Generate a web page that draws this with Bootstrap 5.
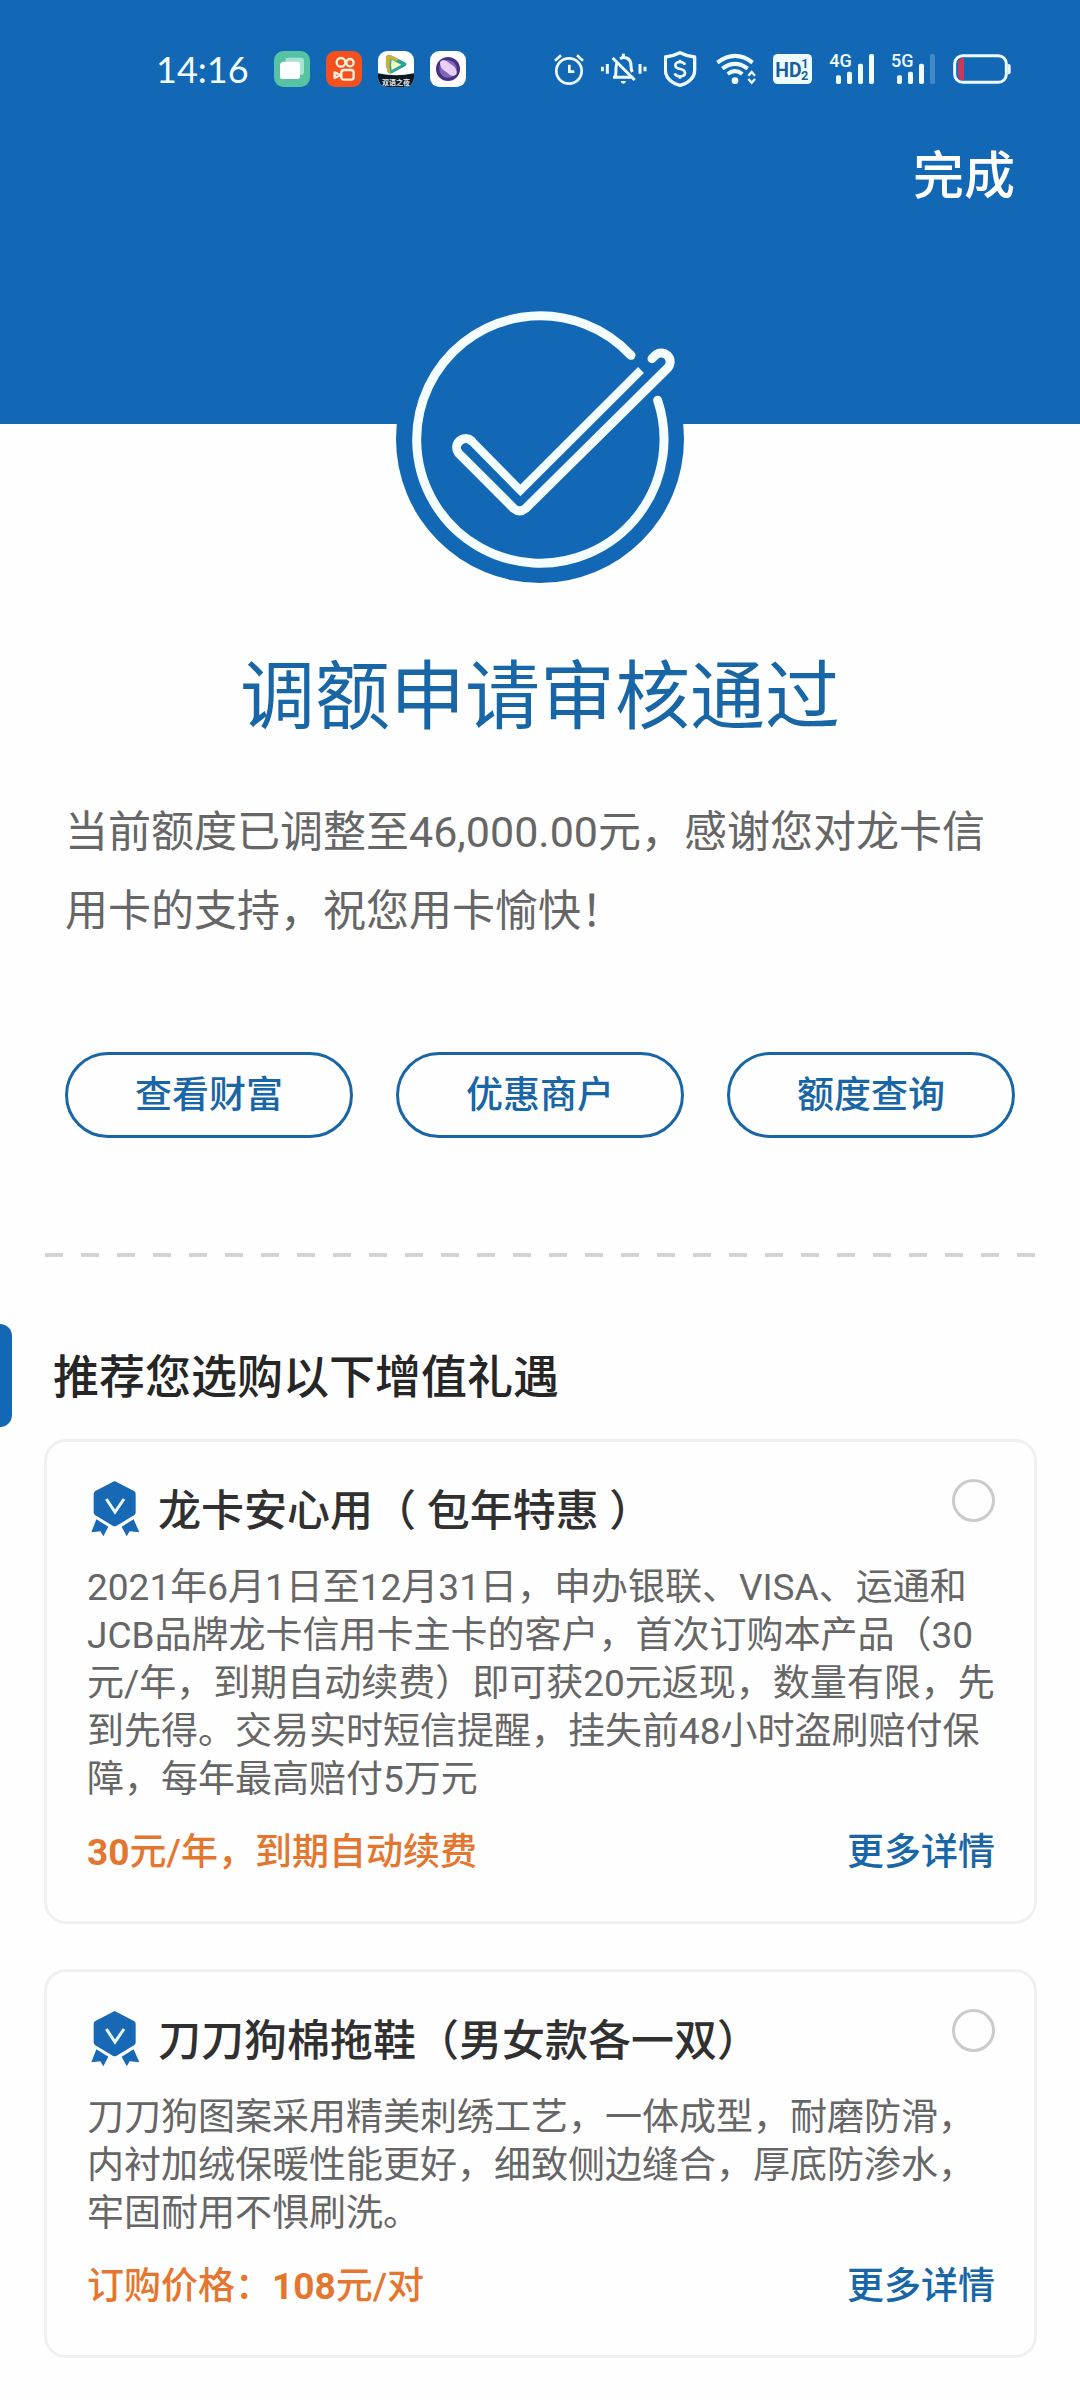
<!DOCTYPE html>
<html lang="zh-CN">
<head>
<meta charset="utf-8">
<meta name="viewport" content="width=device-width, initial-scale=1">
<title>调额申请审核通过</title>
<link href="https://cdn.jsdelivr.net/npm/bootstrap@5.3.0/dist/css/bootstrap.min.css" rel="stylesheet">
<style>
:root { --brand: #1368b6; --brand-ink: #1866a6; --accent: #e5762f; }
body { font-family: Roboto, "Noto Sans CJK SC", sans-serif; background: #fefefe; color: #2b2b2b; }
svg { display: block; flex: none; }
.hero { background: var(--brand); height: 424px; }
.status { padding: 51px 69px 0 156px; height: 87px; color: #f2fdff; }
.status svg { height: 36px; }
.clock { font-family: Lato, sans-serif; font-size: 36px; line-height: 36px; width: 118px; }
.status-icons { gap: 16px; }
.gutter { padding-left: 65px; padding-right: 65px; }
.done { font-size: 51px; line-height: 60px; margin-top: 60px; font-weight: 500; }
.seal { width: 288px; height: 288px; margin-top: -129px; }
.result-title { font-size: 75px; line-height: 100px; font-weight: 400; color: var(--brand-ink); margin: 64px 0 46px; }
.message { font-size: 43px; line-height: 79px; color: #666; margin-bottom: 101px; }
.actions { gap: 43px; }
.btn-pill { --bs-btn-color: var(--brand-ink); --bs-btn-border-color: var(--brand-ink); --bs-btn-hover-bg: var(--brand); --bs-btn-hover-color: #fff; --bs-btn-border-width: 3px; font-size: 37px; line-height: 48px; height: 86px; padding-top: 8px; font-weight: 500; }
.dashes { height: 4px; margin: 115px 45px 67px; background: repeating-linear-gradient(90deg, #d3d3d3 0 18px, transparent 18px 36px); }
.section-head { height: 103px; margin-bottom: 12px; gap: 41px; }
.section-tag { width: 12px; height: 103px; border-radius: 0 12px 12px 0; background: var(--brand); }
.section-head h2 { font-size: 46px; line-height: 60px; font-weight: 500; color: #262626; padding-top: 3px; }
.offers { padding: 0 43px 45px 44px; gap: 45px; }
.offer { border: 3px solid #f0f0f1; border-radius: 22px; background: #fefefe; padding: 37px 39px 44px 40px; }
.offer-title { font-size: 43px; line-height: 60px; font-weight: 500; color: #303030; }
.offer-head { gap: 17px; margin-bottom: 22px; }
.medal { width: 50px; height: 56px; margin: 0 0 4px 4px; }
.offer-radio.form-check-input { width: 43px; height: 43px; border: 3px solid #cbcbcb; margin: 0 0 20px; background-color: #fefefe; }
.offer-text { font-size: 37px; line-height: 48px; color: #666; margin-bottom: 25px; }
.offer-foot { font-size: 37px; line-height: 48px; }
.price { color: var(--accent); font-weight: 500; }
.price b { font-weight: 700; }
.more { color: var(--brand-ink); font-weight: 500; }
</style>
</head>
<body>
<header class="hero">
  <div class="status d-flex align-items-center">
    <time class="clock">14:16</time>
    <div class="status-icons d-flex">
      <svg viewBox="402 63 108 108"><rect x="402" y="63" width="108" height="108" rx="28" fill="#55c3a4"/><rect x="436" y="83" width="56" height="52" rx="9" fill="#a5e4d2"/><path d="M427 95h46q7 0 7 7v38q0 7-7 7h-46q-7 0-7-7v-38z" fill="#fff"/></svg>
      <svg viewBox="558 63 108 108"><rect x="558" y="63" width="108" height="108" rx="28" fill="#f4511e"/><g fill="none" stroke="#fff1df" stroke-width="7" stroke-linejoin="round"><circle cx="603" cy="97" r="13"/><circle cx="630" cy="98" r="11"/><rect x="604" y="120" width="37" height="29" rx="8"/><path d="M584 127l17 8-17 9z"/></g></svg>
      <svg viewBox="714 63 108 108"><clipPath id="tv"><rect x="714" y="63" width="108" height="108" rx="28"/></clipPath><g clip-path="url(#tv)"><path fill="#fff" d="M714 63h108v108H714z"/><path fill="#0c1824" d="M714 130q54 12 108 0v41H714z"/><path d="M738 80q4-8 13-5l44 22q9 6 0 12l-39 21q-11 4-14-6-7-22-4-44z" fill="#28a98c"/><path d="M738 80q4-8 13-5l24 12-24 43q-7 0-9-6-6-22-4-44z" fill="#c9b13a"/><path d="M752 87l40 16-40 24q-6-20 0-40z" fill="#2a9fc4"/><path d="M755 89l29 15-29 16q-4-16 0-31z" fill="#f1fbb8"/><text x="768" y="164" text-anchor="middle" font-size="21" font-weight="700" font-family="Noto Sans CJK SC, sans-serif" fill="#e8eef2">双语之夜</text></g></svg>
      <svg viewBox="870 63 108 108"><rect x="870" y="63" width="108" height="108" rx="28" fill="#fdfcff"/><circle cx="924" cy="117" r="36" fill="#44317f"/><circle cx="924" cy="117" r="26" fill="#8264bd"/><path d="M900 96q12-14 28 4 26 14 22 32-12 14-28-4-24-12-22-32z" fill="#e8cff4"/></svg>
    </div>
    <div class="status-icons d-flex ms-auto">
      <svg viewBox="72 63 93 108" fill="none" stroke="#effcff" stroke-width="8"><circle cx="117" cy="123" r="38"/><path d="M118 104v21h15M75 92l18-16M141 76l18 16"/></svg>
      <svg viewBox="213 63 141 108" fill="none" stroke="#effcff" stroke-width="9"><path d="M217 110v14M232 102v29M330 102v29M345 110v14"/><path d="M249 142h61M256 140q2-8 2-28 0-11 6-17M270 86q10-6 20-2 13 5 13 24 0 10 4 18M248 84l66 66" stroke-width="9"/><path d="M280 71v10"/><path d="M272 153h16q-1 8-8 8t-8-8z" fill="#effcff" stroke="none"/></svg>
      <svg viewBox="402 63 102 108" fill="none" stroke="#effcff"><path d="M450 68q20 10 44 13v38q0 34-44 47-44-13-44-47V81q24-3 44-13z" stroke-width="10" stroke-linejoin="round"/><path d="M465 104q-3-8-15-8-14 0-14 10 0 9 14 11 15 2 15 12t-15 10q-13 0-16-9M450 89v9M450 137v9" stroke-width="8"/></svg>
      <svg viewBox="552 63 129 108" fill="none" stroke="#effcff" stroke-width="12"><path d="M562 98q54-41 106 0M577 116q38-29 76 0M593 132q22-17 44 0"/><circle cx="615" cy="152" r="10" fill="#effcff" stroke="none"/><path d="M655 137l10-11 10 11M655 147l10 11 10-11" stroke-width="7"/></svg>
      <svg viewBox="726 63 120 108"><rect x="726" y="72" width="117" height="90" rx="14" fill="#effcff"/><g fill="#155fa4" font-family="Roboto, sans-serif" font-weight="700"><text x="733" y="140" font-size="58">HD</text><text x="811" y="114" font-size="38">1</text><text x="810" y="149" font-size="38">2</text></g></svg>
      <svg viewBox="894 63 138 108" fill="#effcff"><text x="895" y="112" font-size="54" font-family="Roboto, sans-serif" font-weight="500">4G</text><rect x="915" y="136" width="15" height="26" rx="5"/><rect x="948" y="125" width="15" height="37" rx="5"/><rect x="981" y="101" width="15" height="61" rx="5"/><rect x="1014" y="72" width="15" height="90" rx="5"/></svg>
      <svg viewBox="1083 63 138 108" fill="#effcff"><text x="1083" y="112" font-size="54" font-family="Roboto, sans-serif" font-weight="500">5G</text><rect x="1101" y="136" width="15" height="26" rx="5"/><rect x="1134" y="125" width="15" height="37" rx="5"/><rect x="1167" y="101" width="15" height="61" rx="5"/><rect x="1200" y="72" width="15" height="90" rx="5" opacity=".22"/></svg>
      <svg viewBox="1269 63 174 108" fill="none"><rect x="1274" y="77" width="155" height="80" rx="24" stroke="#effcff" stroke-width="9"/><path d="M1302 83v68q-18 0-18-17v-34q0-17 18-17z" fill="#c83b5c"/><path d="M1434 102q8 0 8 7v17q0 7-8 7z" fill="#effcff"/></svg>
    </div>
  </div>
  <div class="gutter d-flex justify-content-end">
    <button type="button" class="done btn btn-link text-white text-decoration-none border-0 p-0">完成</button>
  </div>
</header>

<main>
  <svg class="seal mx-auto" viewBox="78 15 864 864" fill="none" stroke="#f5feff" role="img" aria-label="审核通过">
    <circle cx="510" cy="447" r="432" fill="#1368b6" stroke="none"/>
    <path d="M783 196A371 371 0 1 0 863 331" stroke-width="27" stroke-linecap="round"/>
    <path d="M846 206l9-9A26 26 0 0 1 893 234L467 655Q449 670 431 655L266 490A27 27 0 0 1 304 452" stroke-width="27" stroke-linecap="round"/>
    <path d="M304 452L451 601L813 240" stroke-width="25"/>
  </svg>
  <section class="gutter">
    <h1 class="result-title text-center">调额申请审核通过</h1>
    <p class="message">当前额度已调整至46,000.00元，感谢您对龙卡信用卡的支持，祝您用卡愉快！</p>
    <div class="actions d-flex">
      <button type="button" class="btn btn-pill rounded-pill flex-fill">查看财富</button>
      <button type="button" class="btn btn-pill rounded-pill flex-fill">优惠商户</button>
      <button type="button" class="btn btn-pill rounded-pill flex-fill">额度查询</button>
    </div>
  </section>
  <div class="dashes"></div>

  <div class="section-head d-flex align-items-center">
    <span class="section-tag"></span>
    <h2 class="mb-0">推荐您选购以下增值礼遇</h2>
  </div>
  <section class="offers d-flex flex-column">
    <article class="offer">
      <div class="offer-head d-flex align-items-center">
        <svg class="medal" viewBox="34 30 150 168" fill="#1769b5"><path d="M105 30l58 30q5 3 5 9v55q0 6-5 9l-52 31q-6 3-12 0l-52-31q-5-3-5-9V69q0-6 5-9z"/><path d="M50 145l36 22-15 29-9-15-27 3zM162 145l-36 22 15 29 9-15 29 3z"/><path d="M80 84l26 39 27-39" fill="none" stroke="#e9f8ff" stroke-width="9"/></svg>
        <label class="offer-title flex-grow-1" for="offer-safe">龙卡安心用（ 包年特惠 ）</label>
        <input class="form-check-input offer-radio" type="radio" name="offer" id="offer-safe">
      </div>
      <p class="offer-text">2021年6月1日至12月31日，申办银联、VISA、运通和JCB品牌龙卡信用卡主卡的客户，首次订购本产品（30元/年，到期自动续费）即可获20元返现，数量有限，先到先得。交易实时短信提醒，挂失前48小时盗刷赔付保障，每年最高赔付5万元</p>
      <div class="offer-foot d-flex justify-content-between">
        <span class="price"><b>30</b>元/年，到期自动续费</span>
        <a class="more text-decoration-none" href="#">更多详情</a>
      </div>
    </article>
    <article class="offer">
      <div class="offer-head d-flex align-items-center">
        <svg class="medal" viewBox="34 30 150 168" fill="#1769b5"><path d="M105 30l58 30q5 3 5 9v55q0 6-5 9l-52 31q-6 3-12 0l-52-31q-5-3-5-9V69q0-6 5-9z"/><path d="M50 145l36 22-15 29-9-15-27 3zM162 145l-36 22 15 29 9-15 29 3z"/><path d="M80 84l26 39 27-39" fill="none" stroke="#e9f8ff" stroke-width="9"/></svg>
        <label class="offer-title flex-grow-1" for="offer-slippers">刀刀狗棉拖鞋（男女款各一双）</label>
        <input class="form-check-input offer-radio" type="radio" name="offer" id="offer-slippers">
      </div>
      <p class="offer-text">刀刀狗图案采用精美刺绣工艺，一体成型，耐磨防滑，内衬加绒保暖性能更好，细致侧边缝合，厚底防渗水，牢固耐用不惧刷洗。</p>
      <div class="offer-foot d-flex justify-content-between">
        <span class="price">订购价格：<b>108</b>元/对</span>
        <a class="more text-decoration-none" href="#">更多详情</a>
      </div>
    </article>
  </section>
</main>
<script src="https://cdn.jsdelivr.net/npm/bootstrap@5.3.0/dist/js/bootstrap.bundle.min.js"></script>
</body>
</html>
